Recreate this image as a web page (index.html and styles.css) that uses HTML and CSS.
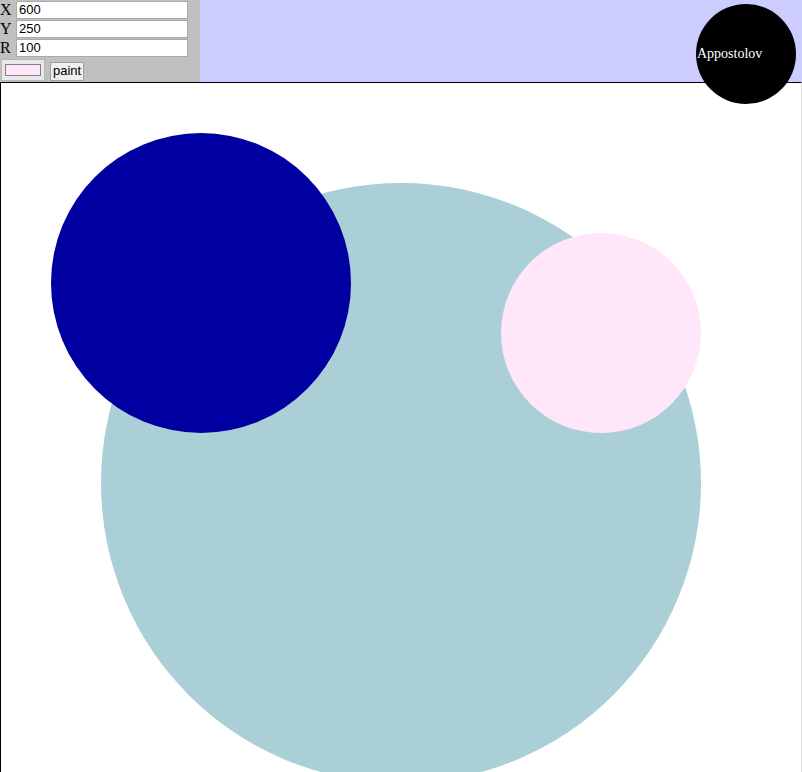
FILE: index.html
```html
<!DOCTYPE html>
<html>
<head>
<meta charset="utf-8">
<link rel="stylesheet" href="styles.css">
</head>
<body>
<header class="top">
  <div class="panel">
    <div class="row"><span class="lbl">X</span><input class="num" type="text" value="600"></div>
    <div class="row"><span class="lbl">Y</span><input class="num" type="text" value="250"></div>
    <div class="row"><span class="lbl">R</span><input class="num" type="text" value="100"></div>
    <div class="row actions"><span class="swatch"><span class="swatch-fill"></span></span><button class="btn">paint</button></div>
  </div>
  <div class="banner"></div>
  <div class="logo"><span>Appostolov</span></div>
</header>
<main class="board">
  <svg class="art" width="800" height="700" viewBox="0 0 800 700">
    <circle cx="400" cy="400" r="300" fill="#aacfd6"/>
    <circle cx="200" cy="200" r="150" fill="#0000a0"/>
    <circle cx="600" cy="250" r="100" fill="#ffe6f9"/>
  </svg>
</main>
</body>
</html>
```
FILE: styles.css
```css
html, body { margin: 0; padding: 0; background: #fff; overflow: hidden; }
body { width: 802px; height: 772px; font-family: "Liberation Serif", serif; }
.top { display: flex; height: 82px; position: relative; }
.panel { width: 200px; background: #c0c0c0; display: flex; flex-direction: column; }
.row { display: flex; align-items: center; height: 19px; flex-shrink: 0; }
.lbl { width: 15px; font-size: 16px; line-height: 18px; color: #000; }
.num { box-sizing: border-box; width: 172px; height: 18px; margin: 0 0 0 1px; padding: 0 2px; border: 1px solid #a9a9a9; background: #fff; font-family: "Liberation Sans", sans-serif; font-size: 13px; color: #000; outline: none; }
.actions { height: 25px; align-items: center; padding-left: 1px; gap: 5px; }
.swatch { box-sizing: border-box; width: 44px; height: 22px; border: 1px solid #b5b5b5; background: #e9e9e9; padding: 4px 3px; display: flex; }
.swatch-fill { flex: 1; background: #ffe6f9; border: 1px solid #808080; }
.btn { box-sizing: border-box; height: 19px; padding: 0 2px; border: 1px solid #a0a0a0; background: #efefef; font-family: "Liberation Sans", sans-serif; font-size: 13px; color: #000; line-height: 16px; margin-top: 3px; }
.banner { flex: 1; background: #ccccff; }
.logo { position: absolute; left: 696px; top: 4px; width: 100px; height: 100px; border-radius: 50%; background: #000; display: flex; align-items: center; z-index: 2; }
.logo span { color: #fff; font-family: "Liberation Serif", serif; font-size: 14px; padding-left: 1px; }
.board { width: 800px; height: 700px; border-top: 1px solid #000; border-left: 1px solid #000; border-right: 1px solid #ddd; }
.art { display: block; }
```
